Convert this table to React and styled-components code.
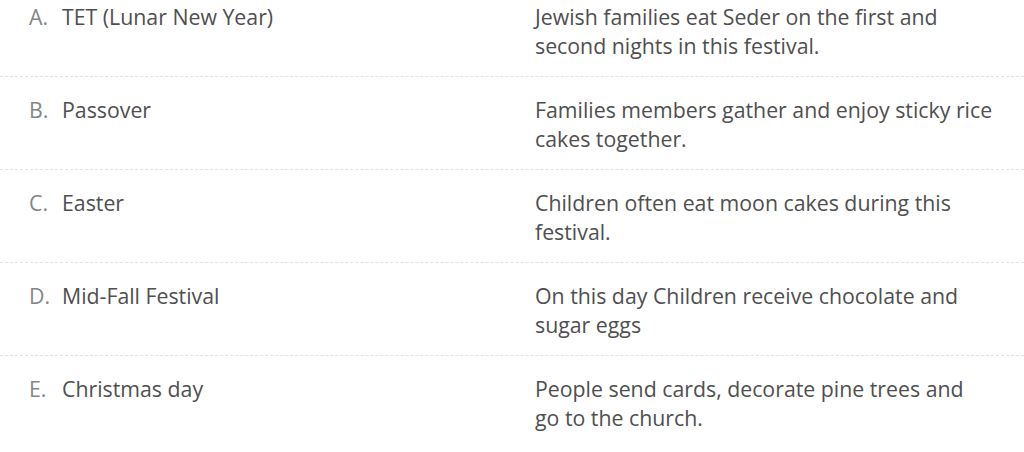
import React from "react";
import styled, { createGlobalStyle } from "styled-components";

const GlobalStyle = createGlobalStyle`
  html, body {
    margin: 0;
    padding: 0;
    background: #fff;
  }
  body {
    font-family: "Open Sans", "Liberation Sans", sans-serif;
  }
`;

const List = styled.div`
  width: 1024px;
  display: flex;
  flex-direction: column;
`;

const Row = styled.div`
  display: grid;
  grid-template-columns: 535px 1fr;
  padding: 18px 0 16px;
  border-bottom: 1px dashed #e2e2e2;

  &:first-child {
    padding-top: 2px;
  }
  &:last-child {
    border-bottom: none;
  }
`;

const Option = styled.div`
  display: flex;
  padding-left: 29px;
  font-size: 21.3px;
  line-height: 29px;
  color: #4f4f4f;
`;

const Letter = styled.span`
  width: 33px;
  flex-shrink: 0;
  color: #858585;
`;

const Match = styled.div`
  display: flex;
  flex-direction: column;
  font-size: 21.3px;
  line-height: 29px;
  color: #4f4f4f;
  white-space: nowrap;
`;

const rows = [
  ["A.", "TET (Lunar New Year)", ["Jewish families eat Seder on the first and", "second nights in this festival."]],
  ["B.", "Passover", ["Families members gather and enjoy sticky rice", "cakes together."]],
  ["C.", "Easter", ["Children often eat moon cakes during this", "festival."]],
  ["D.", "Mid-Fall Festival", ["On this day Children receive chocolate and", "sugar eggs"]],
  ["E.", "Christmas day", ["People send cards, decorate pine trees and", "go to the church."]],
];

export default function App() {
  return (
    <>
      <GlobalStyle />
      <List>
        {rows.map(([letter, name, lines]) => (
          <Row key={letter}>
            <Option>
              <Letter>{letter}</Letter>
              <span>{name}</span>
            </Option>
            <Match>
              {lines.map((line) => (
                <span key={line}>{line}</span>
              ))}
            </Match>
          </Row>
        ))}
      </List>
    </>
  );
}
